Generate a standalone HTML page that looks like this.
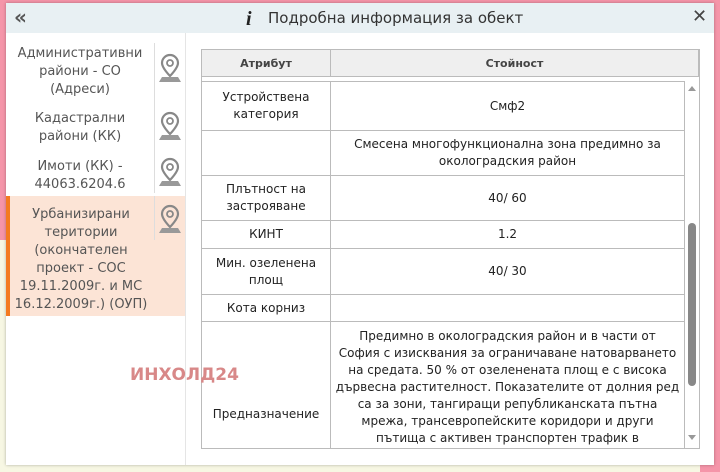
<!DOCTYPE html>
<html><head><meta charset="utf-8"><style>
body{margin:0;width:720px;height:472px;overflow:hidden;background:#f7f7e3;font-family:"DejaVu Sans","Liberation Sans",sans-serif;position:relative}
.pink{position:absolute;background:#f595a9}
.dlg{position:absolute;left:6px;top:3px;width:708px;height:462px;background:#fff;box-shadow:0 0 3px rgba(0,0,0,.3)}
.hd{position:absolute;left:0;top:0;width:708px;height:30px;background:#e8f0f3}
.hd .t{position:absolute;left:262px;top:6px;font-size:15px;color:#333}
.left{position:absolute;left:0;top:30px;width:179px;height:432px;border-right:1px solid #e5e5e5}
.item{position:absolute;left:0;width:179px;color:#555;font-size:13px;line-height:18px;text-align:center}
.item .txt{position:absolute;left:6px;width:136px}
.item .ic{position:absolute;left:148px;width:30px;border-left:1px solid #ddd}
table{position:absolute;border-collapse:collapse;font-size:12px;color:#222;text-align:center}
td{border:1px solid #bbb;line-height:17px;padding:0 4px}
</style></head><body>
<div class="pink" style="left:0;top:0;width:720px;height:240px"></div>
<div class="pink" style="left:700px;top:0;width:20px;height:472px"></div>
<div class="dlg">
 <div class="hd">
  <div style="position:absolute;left:8px;top:2px;font-size:20px;color:#555;font-weight:bold">«</div>
  <div style="position:absolute;left:240px;top:5px;font-size:20px;font-family:'Liberation Serif',serif;font-style:italic;font-weight:bold;color:#222">i</div>
  <div class="t">Подробна информация за обект</div>
  <div style="position:absolute;left:686px;top:3px;font-size:18px;color:#444;font-weight:bold">✕</div>
 </div>
 <div class="left">
  <div class="item" style="top:10px;height:60px"><div class="txt" style="top:2px">Административни райони - СО (Адреси)</div><div class="ic" style="top:0;height:60px"><svg width="30" height="40" viewBox="0 0 30 40" style="margin-top:8px"><path d="M15 4a8 8 0 0 0-8 8c0 5 8 13 8 13s8-8 8-13a8 8 0 0 0-8-8z" fill="none" stroke="#888" stroke-width="2.2"/><circle cx="15" cy="12" r="3" fill="none" stroke="#888" stroke-width="1.8"/><path d="M7 26h16l3 5H4z" fill="#999"/></svg></div></div>
  <div class="item" style="top:75px;height:40px"><div class="txt" style="top:2px">Кадастрални райони (КК)</div><div class="ic" style="top:-5px;height:50px"><svg width="30" height="40" viewBox="0 0 30 40" style="margin-top:6px"><path d="M15 4a8 8 0 0 0-8 8c0 5 8 13 8 13s8-8 8-13a8 8 0 0 0-8-8z" fill="none" stroke="#888" stroke-width="2.2"/><circle cx="15" cy="12" r="3" fill="none" stroke="#888" stroke-width="1.8"/><path d="M7 26h16l3 5H4z" fill="#999"/></svg></div></div>
  <div class="item" style="top:125px;height:40px"><div class="txt" style="top:0">Имоти (КК) - 44063.6204.6</div><div class="ic" style="top:-5px;height:40px"><svg width="30" height="40" viewBox="0 0 30 40" style="margin-top:2px"><path d="M15 4a8 8 0 0 0-8 8c0 5 8 13 8 13s8-8 8-13a8 8 0 0 0-8-8z" fill="none" stroke="#888" stroke-width="2.2"/><circle cx="15" cy="12" r="3" fill="none" stroke="#888" stroke-width="1.8"/><path d="M7 26h16l3 5H4z" fill="#999"/></svg></div></div>
  <div class="item" style="top:163px;height:120px;background:#fce4d6;border-left:4px solid #f47a20;width:175px"><div class="txt" style="top:10px;left:0;width:142px">Урбанизирани територии (окончателен проект - СОС 19.11.2009г. и МС 16.12.2009г.) (ОУП)</div><div class="ic" style="top:0;height:44px;left:144px"><svg width="30" height="40" viewBox="0 0 30 40" style="margin-top:6px"><path d="M15 4a8 8 0 0 0-8 8c0 5 8 13 8 13s8-8 8-13a8 8 0 0 0-8-8z" fill="none" stroke="#888" stroke-width="2.2"/><circle cx="15" cy="12" r="3" fill="none" stroke="#888" stroke-width="1.8"/><path d="M7 26h16l3 5H4z" fill="#999"/></svg></div></div>
 </div>
 <div style="position:absolute;left:195px;top:46px;width:497px;height:398px;border:1px solid #bbb;overflow:hidden">
  <table style="left:-1px;top:-1px;width:498px"><tr style="background:#efefef;height:27px;font-weight:bold;color:#444;font-size:11px"><td style="width:120px">Атрибут</td><td>Стойност</td></tr></table>
  <table style="left:-1px;top:31px;width:484px">
   <tr style="height:49px"><td style="width:120px">Устройствена<br>категория</td><td>Смф2</td></tr>
   <tr style="height:45px"><td></td><td>Смесена многофункционална зона предимно за<br>околоградския район</td></tr>
   <tr style="height:45px"><td>Плътност на<br>застрояване</td><td>40/ 60</td></tr>
   <tr style="height:28px"><td>КИНТ</td><td>1.2</td></tr>
   <tr style="height:46px"><td>Мин. озеленена<br>площ</td><td>40/ 30</td></tr>
   <tr style="height:27px"><td>Кота корниз</td><td></td></tr>
   <tr style="height:140px"><td style="vertical-align:top;padding-top:84px">Предназначение</td><td style="vertical-align:top;padding:6px 4px 0">Предимно в околоградския район и в части от<br>София с изисквания за ограничаване натоварването<br>на средата. 50 % от озеленената площ е с висока<br>дървесна растителност. Показателите от долния ред<br>са за зони, тангиращи републиканската пътна<br>мрежа, трансевропейските коридори и други<br>пътища с активен транспортен трафик в</td></tr>
  </table>
  <div style="position:absolute;left:483px;top:31px;width:14px;height:367px;background:#fff"></div>
  <div style="position:absolute;left:486px;top:36px;border:4px solid transparent;border-bottom:5px solid #999;border-top:0"></div>
  <div style="position:absolute;left:486px;top:173px;width:8px;height:163px;background:#888;border-radius:4px"></div>
  <div style="position:absolute;left:486px;top:385px;border:4px solid transparent;border-top:5px solid #999;border-bottom:0"></div>
 </div>
 <div style="position:absolute;left:124px;top:362px;font-size:17px;font-weight:bold;color:#d88888">ИНХОЛД24</div>
</div>
</body></html>
